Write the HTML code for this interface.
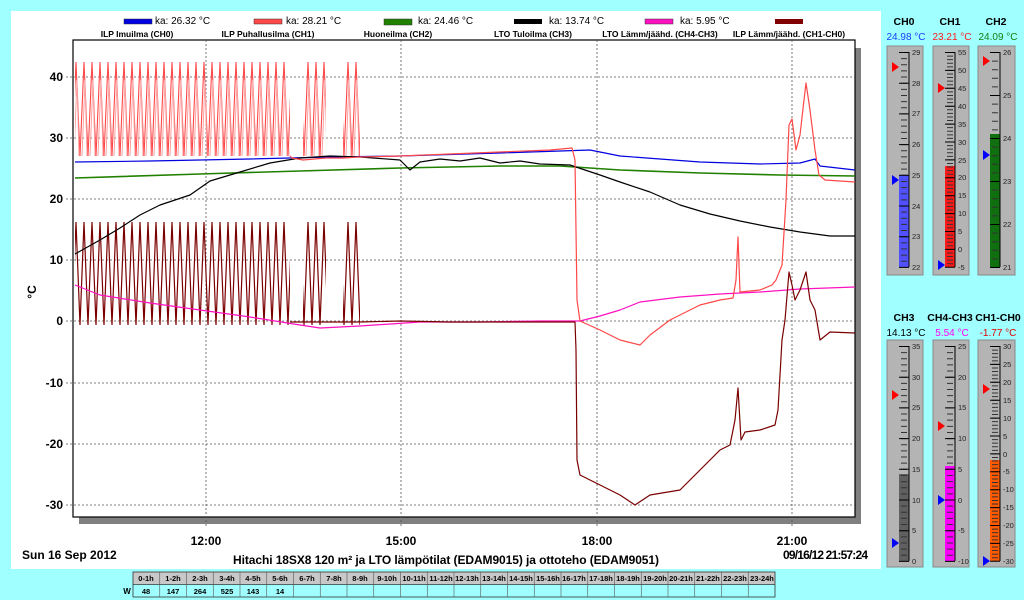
<!DOCTYPE html>
<html><head><meta charset="utf-8"><style>
body{margin:0;width:1024px;height:600px;background:#a0ffff;overflow:hidden;font-family:"Liberation Sans",Arial,sans-serif}
svg{position:absolute;left:0;top:0}
</style></head><body>
<svg width="1024" height="600" viewBox="0 0 1024 600" font-family="Liberation Sans, Arial, sans-serif">
<defs>
<pattern id="pr" width="8" height="600" patternUnits="userSpaceOnUse"><path d="M0,156 L4,62 L8,156" stroke="#ff4848" stroke-width="1.1" fill="none"/><path d="M2,156 L5,80 L7,156" stroke="#ffa0a0" stroke-width="1" fill="none"/></pattern>
<pattern id="pd" width="8" height="600" patternUnits="userSpaceOnUse"><path d="M0,325 L4,222 L8,325" stroke="#7a0000" stroke-width="1.2" fill="none"/></pattern>
</defs>
<rect x="11" y="11" width="870" height="558" fill="#fff"/>
<!-- legend -->
<g font-size="10" fill="#000">
<rect x="124" y="19" width="28" height="5" fill="#0000e0" stroke="#333" stroke-width=".5"/><text x="155" y="24">ka: 26.32 °C</text>
<rect x="254" y="19" width="28" height="5" fill="#ff4848" stroke="#333" stroke-width=".5"/><text x="286" y="24">ka: 28.21 °C</text>
<rect x="384" y="19" width="28" height="6" fill="#208000" stroke="#333" stroke-width=".5"/><text x="418" y="24">ka: 24.46 °C</text>
<rect x="514" y="19" width="28" height="5" fill="#000"/><text x="549" y="24">ka: 13.74 °C</text>
<rect x="645" y="19" width="28" height="5" fill="#ff10c0" stroke="#333" stroke-width=".5"/><text x="680" y="24">ka: 5.95 °C</text>
<rect x="775" y="19" width="28" height="5" fill="#800000"/>
</g>
<g font-size="8.5" font-weight="bold" fill="#000" text-anchor="middle">
<text x="137" y="37">ILP Imuilma (CH0)</text>
<text x="268" y="37">ILP Puhallusilma (CH1)</text>
<text x="398" y="37">Huoneilma (CH2)</text>
<text x="533" y="37">LTO Tuloilma (CH3)</text>
<text x="660" y="37">LTO Lämm/jäähd. (CH4-CH3)</text>
<text x="789" y="37">ILP Lämm/jäähd. (CH1-CH0)</text>
</g>
<!-- plot frame -->
<rect x="79" y="517" width="782" height="7" fill="#808080"/>
<rect x="855" y="48" width="6" height="476" fill="#808080"/>
<rect x="73" y="40" width="782" height="477" fill="#fff" stroke="#000" stroke-width="1.2"/>
<g stroke="#555" stroke-width=".8" stroke-dasharray="2 2" fill="none">
<line x1="66" y1="77" x2="855" y2="77"/><line x1="66" y1="138" x2="855" y2="138"/><line x1="66" y1="199" x2="855" y2="199"/><line x1="66" y1="260" x2="855" y2="260"/><line x1="66" y1="321" x2="855" y2="321"/><line x1="66" y1="383" x2="855" y2="383"/><line x1="66" y1="444" x2="855" y2="444"/><line x1="66" y1="505" x2="855" y2="505"/>
<line x1="206" y1="40" x2="206" y2="527"/><line x1="401" y1="40" x2="401" y2="527"/><line x1="597" y1="40" x2="597" y2="527"/><line x1="792" y1="40" x2="792" y2="527"/>
</g>
<g font-size="12" font-weight="bold" text-anchor="end">
<text x="63" y="81">40</text><text x="63" y="142">30</text><text x="63" y="203">20</text><text x="63" y="264">10</text><text x="63" y="325">0</text><text x="63" y="387">-10</text><text x="63" y="448">-20</text><text x="63" y="509">-30</text>
</g>
<text x="36" y="292" font-size="12" font-weight="bold" transform="rotate(-90 36 292)" text-anchor="middle">°C</text>
<g font-size="12" font-weight="bold" text-anchor="middle">
<text x="206" y="545">12:00</text><text x="401" y="545">15:00</text><text x="597" y="545">18:00</text><text x="792" y="545">21:00</text>
</g>
<text x="22" y="559" font-size="12" font-weight="bold">Sun 16 Sep 2012</text>
<text x="446" y="564" font-size="12" font-weight="bold" text-anchor="middle" textLength="426">Hitachi 18SX8 120 m² ja LTO lämpötilat (EDAM9015) ja ottoteho (EDAM9051)</text>
<text x="783" y="559" font-size="12" font-weight="bold" textLength="85">09/16/12 21:57:24</text>
<!-- traces -->
<rect x="75" y="45" width="215" height="125" fill="url(#pr)"/>
<rect x="303" y="50" width="23" height="115" fill="url(#pr)"/>
<rect x="343" y="50" width="17" height="115" fill="url(#pr)"/>
<rect x="75" y="215" width="215" height="115" fill="url(#pd)"/>
<rect x="303" y="215" width="23" height="115" fill="url(#pd)"/>
<rect x="343" y="215" width="17" height="115" fill="url(#pd)"/>
<g fill="none" stroke-width="1.2" stroke-linejoin="round">
<polyline stroke="#0000e0" points="75,162 150,161 250,159 330,157 400,156 500,153 590,150 620,156 700,162 760,164 800,163 815,159 820,166 855,170"/>
<polyline stroke="#208000" stroke-width="1.6" points="75,178 200,174 300,171 400,168 500,166 560,166 620,170 700,173 780,175 855,176"/>
<polyline stroke="#000" points="75,254 100,240 120,228 140,215 160,205 190,195 210,181 240,172 270,163 300,158 330,156 360,157 400,160 410,170 420,162 440,159 460,161 480,158 500,163 520,161 540,164 570,165 600,175 620,182 650,192 680,205 710,214 740,221 770,227 800,232 830,236 855,236"/>
<polyline stroke="#ff10c0" points="75,285 100,295 150,303 200,310 250,317 300,325 320,328 360,326 420,322 480,322 540,321 580,321 600,316 620,310 640,302 680,297 720,294 760,292 800,289 855,287"/>
<polyline stroke="#ff4848" points="290,156 292,158 303,160 326,158 343,158 360,157 400,156 450,154 500,152 550,150 572,148 575,160 577,300 580,321 600,330 620,340 640,345 650,335 670,320 700,305 720,300 733,298 736,280 738,237 740,292 760,290 772,285 776,280 782,265 786,200 789,125 792,119 796,150 800,135 804,100 806,83 810,110 815,150 819,175 825,180 855,182"/>
<polyline stroke="#7a0000" points="290,322 303,322 326,322 343,322 360,322 400,321 450,322 500,322 575,322 576,350 577,460 580,475 600,485 620,495 635,505 650,495 680,490 700,470 720,450 730,445 735,420 738,388 741,440 745,432 760,430 775,425 778,410 782,340 785,320 789,272 792,285 795,300 800,290 804,278 806,272 810,300 815,310 820,340 830,332 855,333"/>
</g>
<!-- table -->
<g font-size="7.5" font-weight="bold" text-anchor="middle">
<rect x="133" y="572" width="642" height="12" fill="#c8c8c8"/>
<rect x="133" y="572" width="642" height="25" fill="none" stroke="#333" stroke-width=".8"/>
<line x1="133" y1="584.5" x2="775" y2="584.5" stroke="#333" stroke-width=".8"/>
<text x="127" y="594" font-size="8">W</text>
<g stroke="#555" stroke-width=".6">
<line x1="159.75" y1="572" x2="159.75" y2="597"/><line x1="186.5" y1="572" x2="186.5" y2="597"/><line x1="213.25" y1="572" x2="213.25" y2="597"/><line x1="240" y1="572" x2="240" y2="597"/><line x1="266.75" y1="572" x2="266.75" y2="597"/><line x1="293.5" y1="572" x2="293.5" y2="597"/><line x1="320.25" y1="572" x2="320.25" y2="597"/><line x1="347" y1="572" x2="347" y2="597"/><line x1="373.75" y1="572" x2="373.75" y2="597"/><line x1="400.5" y1="572" x2="400.5" y2="597"/><line x1="427.25" y1="572" x2="427.25" y2="597"/><line x1="454" y1="572" x2="454" y2="597"/><line x1="480.75" y1="572" x2="480.75" y2="597"/><line x1="507.5" y1="572" x2="507.5" y2="597"/><line x1="534.25" y1="572" x2="534.25" y2="597"/><line x1="561" y1="572" x2="561" y2="597"/><line x1="587.75" y1="572" x2="587.75" y2="597"/><line x1="614.5" y1="572" x2="614.5" y2="597"/><line x1="641.25" y1="572" x2="641.25" y2="597"/><line x1="668" y1="572" x2="668" y2="597"/><line x1="694.75" y1="572" x2="694.75" y2="597"/><line x1="721.5" y1="572" x2="721.5" y2="597"/><line x1="748.25" y1="572" x2="748.25" y2="597"/>
</g>
<text x="146" y="581">0-1h</text><text x="173" y="581">1-2h</text><text x="200" y="581">2-3h</text><text x="227" y="581">3-4h</text><text x="253" y="581">4-5h</text><text x="280" y="581">5-6h</text><text x="307" y="581">6-7h</text><text x="334" y="581">7-8h</text><text x="360" y="581">8-9h</text><text x="387" y="581">9-10h</text><text x="414" y="581">10-11h</text><text x="441" y="581">11-12h</text><text x="467" y="581">12-13h</text><text x="494" y="581">13-14h</text><text x="521" y="581">14-15h</text><text x="548" y="581">15-16h</text><text x="574" y="581">16-17h</text><text x="601" y="581">17-18h</text><text x="628" y="581">18-19h</text><text x="655" y="581">19-20h</text><text x="681" y="581">20-21h</text><text x="708" y="581">21-22h</text><text x="735" y="581">22-23h</text><text x="762" y="581">23-24h</text>
<text x="146" y="594">48</text><text x="173" y="594">147</text><text x="200" y="594">264</text><text x="227" y="594">525</text><text x="253" y="594">143</text><text x="280" y="594">14</text>
</g>
<!-- thermometers -->
<g font-size="10.5" font-weight="bold" text-anchor="middle">
<text x="904" y="25">CH0</text><text x="950" y="25">CH1</text><text x="996" y="25">CH2</text>
<text x="904" y="321">CH3</text><text x="950" y="321">CH4-CH3</text><text x="998" y="321">CH1-CH0</text>
</g>
<g font-size="10" text-anchor="middle">
<text x="906" y="40" fill="#1a3cff">24.98 °C</text><text x="952" y="40" fill="#ff1a1a">23.21 °C</text><text x="998" y="40" fill="#108010">24.09 °C</text>
<text x="906" y="336" fill="#000">14.13 °C</text><text x="952" y="336" fill="#ff00ff">5.54 °C</text><text x="998" y="336" fill="#e00000">-1.77 °C</text>
</g>
<!-- CH0 -->
<g transform="translate(887,46)" font-size="7.5" fill="#222">
<rect x="0" y="0" width="36" height="229" fill="#b4b4b4" stroke="#888"/>
<rect x="12" y="129" width="10" height="92" fill="#5050ff"/>
<line x1="17" y1="6" x2="17" y2="221" stroke="#333" stroke-width="6" stroke-dasharray="1 5.14"/>
<line x1="17" y1="6" x2="17" y2="222" stroke="#000" stroke-width="10" stroke-dasharray="1 29.7"/>
<line x1="22" y1="6" x2="22" y2="221" stroke="#000"/>
<text x="25" y="9">29</text><text x="25" y="40">28</text><text x="25" y="70">27</text><text x="25" y="101">26</text><text x="25" y="132">25</text><text x="25" y="163">24</text><text x="25" y="193">23</text><text x="25" y="224">22</text>
<path d="M5,16 L12,21 L5,26Z" fill="#f00"/><path d="M5,129 L12,134 L5,139Z" fill="#00f"/>
</g>
<!-- CH1 -->
<g transform="translate(933,46)" font-size="7.5" fill="#222">
<rect x="0" y="0" width="36" height="229" fill="#b4b4b4" stroke="#888"/>
<rect x="12" y="120" width="10" height="101" fill="#ff1a1a"/>
<line x1="17" y1="6" x2="17" y2="221" stroke="#333" stroke-width="6" stroke-dasharray="1 2.58"/>
<line x1="17" y1="6" x2="17" y2="222" stroke="#000" stroke-width="10" stroke-dasharray="1 16.9"/>
<line x1="22" y1="6" x2="22" y2="221" stroke="#000"/>
<text x="25" y="9">55</text><text x="25" y="27">50</text><text x="25" y="45">45</text><text x="25" y="63">40</text><text x="25" y="81">35</text><text x="25" y="99">30</text><text x="25" y="117">25</text><text x="25" y="134">20</text><text x="25" y="152">15</text><text x="25" y="170">10</text><text x="25" y="188">5</text><text x="25" y="206">0</text><text x="25" y="224">-5</text>
<path d="M5,37 L12,42 L5,47Z" fill="#f00"/><path d="M5,214 L12,219 L5,224Z" fill="#00f"/>
</g>
<!-- CH2 -->
<g transform="translate(978,46)" font-size="7.5" fill="#222">
<rect x="0" y="0" width="37" height="229" fill="#b4b4b4" stroke="#888"/>
<rect x="12" y="88" width="10" height="133" fill="#107010"/>
<line x1="17" y1="6" x2="17" y2="221" stroke="#333" stroke-width="6" stroke-dasharray="1 7.6"/>
<line x1="17" y1="6" x2="17" y2="222" stroke="#000" stroke-width="10" stroke-dasharray="1 42"/>
<line x1="22" y1="6" x2="22" y2="221" stroke="#000"/>
<text x="25" y="9">26</text><text x="25" y="52">25</text><text x="25" y="95">24</text><text x="25" y="138">23</text><text x="25" y="181">22</text><text x="25" y="224">21</text>
<path d="M5,10 L12,15 L5,20Z" fill="#f00"/><path d="M5,104 L12,109 L5,114Z" fill="#00f"/>
</g>
<!-- CH3 -->
<g transform="translate(887,340)" font-size="7.5" fill="#222">
<rect x="0" y="0" width="36" height="227" fill="#b4b4b4" stroke="#888"/>
<rect x="12" y="134" width="10" height="87" fill="#606060"/>
<line x1="17" y1="6" x2="17" y2="221" stroke="#333" stroke-width="6" stroke-dasharray="1 5.14"/>
<line x1="17" y1="6" x2="17" y2="222" stroke="#000" stroke-width="10" stroke-dasharray="1 29.7"/>
<line x1="22" y1="6" x2="22" y2="221" stroke="#000"/>
<text x="25" y="9">35</text><text x="25" y="40">30</text><text x="25" y="70">25</text><text x="25" y="101">20</text><text x="25" y="132">15</text><text x="25" y="163">10</text><text x="25" y="193">5</text><text x="25" y="224">0</text>
<path d="M5,50 L12,55 L5,60Z" fill="#f00"/><path d="M5,198 L12,203 L5,208Z" fill="#00f"/>
</g>
<!-- CH4-CH3 -->
<g transform="translate(933,340)" font-size="7.5" fill="#222">
<rect x="0" y="0" width="36" height="227" fill="#b4b4b4" stroke="#888"/>
<rect x="12" y="126" width="10" height="95" fill="#ff00ff"/>
<line x1="17" y1="6" x2="17" y2="221" stroke="#333" stroke-width="6" stroke-dasharray="1 5.14"/>
<line x1="17" y1="6" x2="17" y2="222" stroke="#000" stroke-width="10" stroke-dasharray="1 29.7"/>
<line x1="22" y1="6" x2="22" y2="221" stroke="#000"/>
<text x="25" y="9">25</text><text x="25" y="40">20</text><text x="25" y="70">15</text><text x="25" y="101">10</text><text x="25" y="132">5</text><text x="25" y="163">0</text><text x="25" y="193">-5</text><text x="25" y="224">-10</text>
<path d="M5,81 L12,86 L5,91Z" fill="#f00"/><path d="M5,155 L12,160 L5,165Z" fill="#00f"/>
</g>
<!-- CH1-CH0 -->
<g transform="translate(978,340)" font-size="7.5" fill="#222">
<rect x="0" y="0" width="37" height="227" fill="#b4b4b4" stroke="#888"/>
<rect x="12" y="120" width="10" height="101" fill="#ff5a00"/>
<line x1="17" y1="6" x2="17" y2="221" stroke="#333" stroke-width="6" stroke-dasharray="1 2.58"/>
<line x1="17" y1="6" x2="17" y2="222" stroke="#000" stroke-width="10" stroke-dasharray="1 16.9"/>
<line x1="22" y1="6" x2="22" y2="221" stroke="#000"/>
<text x="25" y="9">30</text><text x="25" y="27">25</text><text x="25" y="45">20</text><text x="25" y="63">15</text><text x="25" y="81">10</text><text x="25" y="99">5</text><text x="25" y="117">0</text><text x="25" y="134">-5</text><text x="25" y="152">-10</text><text x="25" y="170">-15</text><text x="25" y="188">-20</text><text x="25" y="206">-25</text><text x="25" y="224">-30</text>
<path d="M5,44 L12,49 L5,54Z" fill="#f00"/><path d="M5,216 L12,221 L5,226Z" fill="#00f"/>
</g>
</svg>
</body></html>
